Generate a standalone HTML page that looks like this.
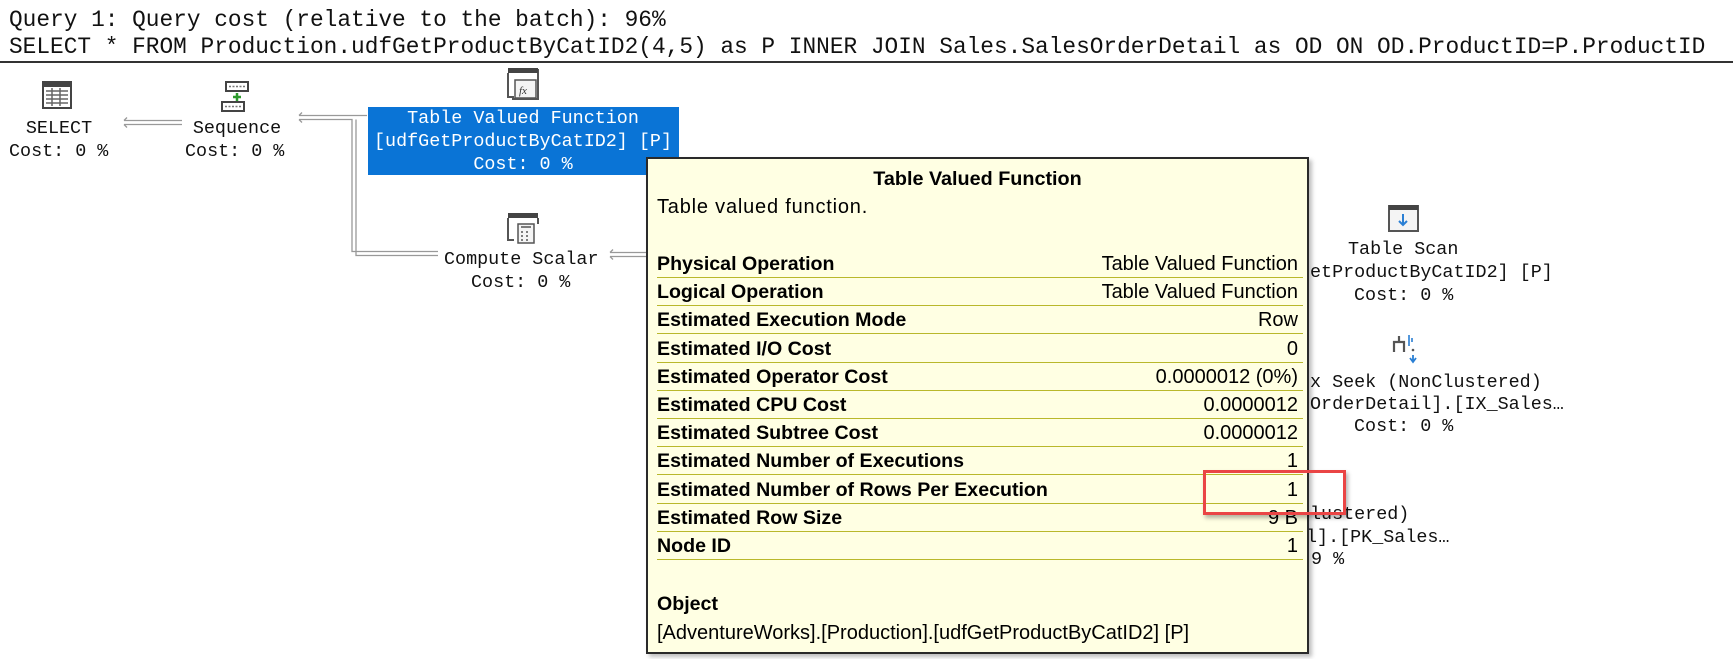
<!DOCTYPE html>
<html><head><meta charset="utf-8"><style>
html,body{margin:0;padding:0;background:#fff;width:1733px;height:659px;overflow:hidden;position:relative}
.m{position:absolute;font-family:"Liberation Mono",monospace;white-space:pre;color:#111}
.q{font-size:22.8px;line-height:26px;left:9px}
.n{font-size:18.4px;line-height:22px}
.c{text-align:center;transform:translateX(-50%)}
#tip{position:absolute;left:646px;top:157px;width:659px;height:493px;background:#ffffe3;border:2px solid #2a2a2a;box-shadow:3px 3px 4px rgba(0,0,0,.25);font-family:"Liberation Sans",sans-serif;color:#000}
.row{position:absolute;left:9px;width:646px;height:27px;border-bottom:1.6px solid #b9b82c;font-size:20px;line-height:28px}
.row b{position:absolute;left:0;top:0;font-size:19.6px}
.row span{position:absolute;right:5px;top:0}
</style></head><body>
<div class="m q" style="top:7px">Query 1: Query cost (relative to the batch): 96%</div>
<div class="m q" style="top:34px">SELECT * FROM Production.udfGetProductByCatID2(4,5) as P INNER JOIN Sales.SalesOrderDetail as OD ON OD.ProductID=P.ProductID</div>
<div style="position:absolute;left:0;top:61px;width:1733px;height:2px;background:#333"></div>

<svg width="1733" height="659" style="position:absolute;left:0;top:0">
 <g fill="none" stroke="#999" stroke-width="1.3">
  <path d="M124 120.5H182M124 124.5H182M124 120.5L127 117.5M124 124.5L127 127.5"/>
  <path d="M299 115.5H367M299 119.5H352V251.5H438M356 119.5V255.5H438M299 115.5L302 112.5M299 119.5L302 122.5"/>
  <path d="M610 252.5H646M610 256.5H646M610 252.5L613 249.5M610 256.5L613 259.5"/>
 </g>
 <rect x="43" y="82" width="28" height="26" fill="#fff" stroke="#444" stroke-width="2"/>
 <rect x="43" y="82" width="28" height="5" fill="#444"/>
 <g stroke="#666" stroke-width="1.5"><path d="M46 91H68M46 95H68M46 99H68M46 103H68M52 88V106M60 88V106"/></g>
 <rect x="226" y="82" width="22" height="9" fill="#fff" stroke="#444" stroke-width="2"/>
 <path d="M229 86.5H245" stroke="#777" stroke-width="1.5" stroke-dasharray="2 1.5"/>
 <rect x="222" y="102" width="22" height="9" fill="#fff" stroke="#444" stroke-width="2"/>
 <path d="M225 106.5H241" stroke="#777" stroke-width="1.5" stroke-dasharray="2 1.5"/>
 <path d="M237 93V101M233 97H241" stroke="#2d9a2d" stroke-width="2.5"/>
 <path d="M508 70H538V99H512" fill="none" stroke="#555" stroke-width="2"/>
 <rect x="508" y="68" width="30" height="5" fill="#444"/>
 <path d="M508 73V97H514" fill="none" stroke="#555" stroke-width="2"/>
 <rect x="515" y="80" width="21" height="18" fill="#f4f4f4" stroke="#555" stroke-width="1.5"/>
 <text x="519" y="94" font-family="Liberation Serif,serif" font-style="italic" font-size="11" fill="#333">fx</text>
 <rect x="508" y="213" width="30" height="5" fill="#444"/>
 <path d="M508 218V240H514M538 218V224" fill="none" stroke="#555" stroke-width="2"/>
 <rect x="518" y="224" width="16" height="19" fill="#f4f4f4" stroke="#555" stroke-width="1.5"/>
 <path d="M521 227H531M521 232H523M526 232H528M521 236H523M526 236H528M521 240H523M526 240H528" stroke="#555" stroke-width="1.5"/>
 <rect x="1389" y="206" width="29" height="25" fill="#f4f4f4" stroke="#555" stroke-width="2"/>
 <rect x="1389" y="205" width="29" height="5" fill="#444"/>
 <path d="M1403 214V225M1399 221L1403 225L1407 221" fill="none" stroke="#2a7fd4" stroke-width="2"/>
 <path d="M1394 352V342H1404V352M1399 336V342" fill="none" stroke="#555" stroke-width="2.2"/>
 <path d="M1409 335V346M1412 338V342" stroke="#2a7fd4" stroke-width="1.6"/>
 <circle cx="1413" cy="350" r="1.3" fill="#555"/>
 <path d="M1413 355V361M1410 358L1413 362L1416 358" fill="none" stroke="#2a7fd4" stroke-width="1.8"/>
</svg>

<div class="m n c" style="left:59px;top:118px">SELECT</div>
<div class="m n" style="left:9px;top:141px">Cost: 0 %</div>
<div class="m n c" style="left:237px;top:118px">Sequence</div>
<div class="m n" style="left:185px;top:141px">Cost: 0 %</div>
<div style="position:absolute;left:368px;top:107px;width:311px;height:68px;background:#0a74d6"></div>
<div class="m n c" style="left:523px;top:107px;color:#fff;line-height:23px">Table Valued Function
[udfGetProductByCatID2] [P]
Cost: 0 %</div>
<div class="m n" style="left:444px;top:249px">Compute Scalar</div>
<div class="m n" style="left:471px;top:272px">Cost: 0 %</div>

<div class="m n" style="left:1348px;top:239px">Table Scan</div>
<div class="m n" style="left:1310px;top:262px">etProductByCatID2] [P]</div>
<div class="m n" style="left:1354px;top:285px">Cost: 0 %</div>
<div class="m n" style="left:1310px;top:372px">x Seek (NonClustered)</div>
<div class="m n" style="left:1310px;top:394px">OrderDetail].[IX_Sales…</div>
<div class="m n" style="left:1354px;top:416px">Cost: 0 %</div>
<div class="m n" style="left:1310px;top:504px">lustered)</div>
<div class="m n" style="left:1306px;top:527px">l].[PK_Sales…</div>
<div class="m n" style="left:1311px;top:549px">9 %</div>

<div id="tip">
 <div style="position:absolute;left:0;width:659px;top:8px;text-align:center;font-weight:bold;font-size:19.8px;line-height:24px">Table Valued Function</div>
 <div style="position:absolute;left:9px;top:36px;font-size:20px;letter-spacing:0.8px;line-height:24px">Table valued function.</div>
 <div class="row" style="top:91px"><b>Physical Operation</b><span>Table Valued Function</span></div>
 <div class="row" style="top:119.2px"><b>Logical Operation</b><span>Table Valued Function</span></div>
 <div class="row" style="top:147.4px"><b>Estimated Execution Mode</b><span>Row</span></div>
 <div class="row" style="top:175.6px"><b>Estimated I/O Cost</b><span>0</span></div>
 <div class="row" style="top:203.8px"><b>Estimated Operator Cost</b><span>0.0000012 (0%)</span></div>
 <div class="row" style="top:232px"><b>Estimated CPU Cost</b><span>0.0000012</span></div>
 <div class="row" style="top:260.2px"><b>Estimated Subtree Cost</b><span>0.0000012</span></div>
 <div class="row" style="top:288.4px"><b>Estimated Number of Executions</b><span>1</span></div>
 <div class="row" style="top:316.6px"><b>Estimated Number of Rows Per Execution</b><span>1</span></div>
 <div class="row" style="top:344.8px"><b>Estimated Row Size</b><span>9 B</span></div>
 <div class="row" style="top:373px"><b>Node ID</b><span>1</span></div>
 <div style="position:absolute;left:9px;top:433px;font-size:19.6px;line-height:24px;font-weight:bold">Object</div>
 <div style="position:absolute;left:9px;top:462px;font-size:20px;line-height:24px">[AdventureWorks].[Production].[udfGetProductByCatID2] [P]</div>
</div>
<div style="position:absolute;left:1203px;top:470px;width:137px;height:39px;border:3px solid #ea4545;box-shadow:2px 3px 4px rgba(0,0,0,.3)"></div>
</body></html>
